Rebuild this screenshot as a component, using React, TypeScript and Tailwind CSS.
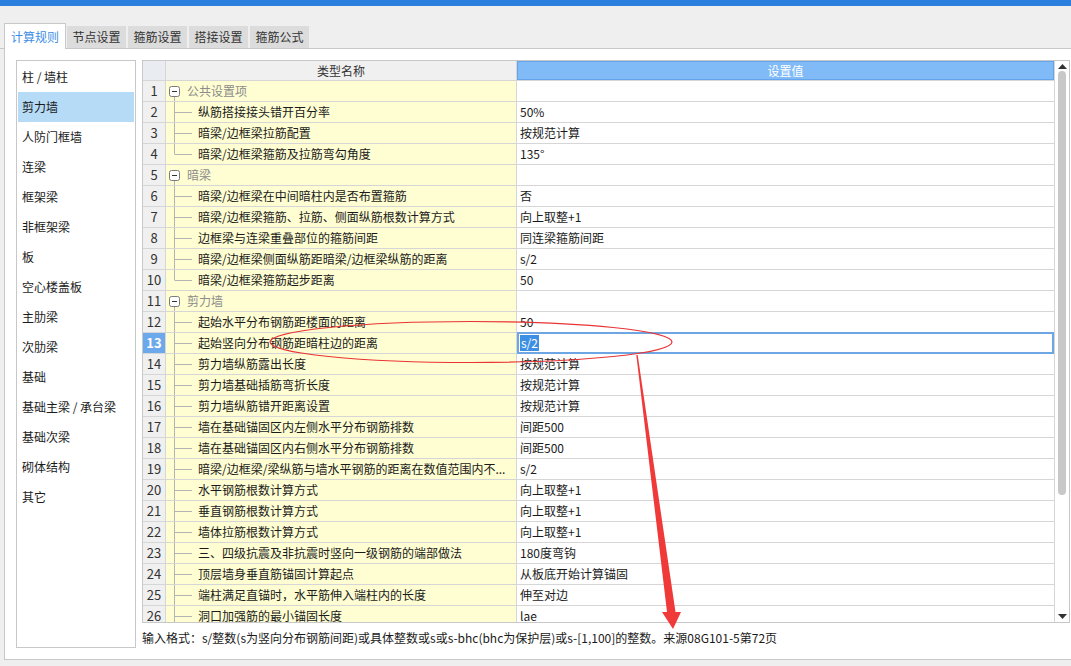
import React from "react";

type Row = { name: string; value: string; group?: boolean; last?: boolean };

const rows: Row[] = [
  { name: "公共设置项", value: "", group: true },
  { name: "纵筋搭接接头错开百分率", value: "50%" },
  { name: "暗梁/边框梁拉筋配置", value: "按规范计算" },
  { name: "暗梁/边框梁箍筋及拉筋弯勾角度", value: "135°", last: true },
  { name: "暗梁", value: "", group: true },
  { name: "暗梁/边框梁在中间暗柱内是否布置箍筋", value: "否" },
  { name: "暗梁/边框梁箍筋、拉筋、侧面纵筋根数计算方式", value: "向上取整+1" },
  { name: "边框梁与连梁重叠部位的箍筋间距", value: "同连梁箍筋间距" },
  { name: "暗梁/边框梁侧面纵筋距暗梁/边框梁纵筋的距离", value: "s/2" },
  { name: "暗梁/边框梁箍筋起步距离", value: "50", last: true },
  { name: "剪力墙", value: "", group: true },
  { name: "起始水平分布钢筋距楼面的距离", value: "50" },
  { name: "起始竖向分布钢筋距暗柱边的距离", value: "s/2" },
  { name: "剪力墙纵筋露出长度", value: "按规范计算" },
  { name: "剪力墙基础插筋弯折长度", value: "按规范计算" },
  { name: "剪力墙纵筋错开距离设置", value: "按规范计算" },
  { name: "墙在基础锚固区内左侧水平分布钢筋排数", value: "间距500" },
  { name: "墙在基础锚固区内右侧水平分布钢筋排数", value: "间距500" },
  { name: "暗梁/边框梁/梁纵筋与墙水平钢筋的距离在数值范围内不...", value: "s/2" },
  { name: "水平钢筋根数计算方式", value: "向上取整+1" },
  { name: "垂直钢筋根数计算方式", value: "向上取整+1" },
  { name: "墙体拉筋根数计算方式", value: "向上取整+1" },
  { name: "三、四级抗震及非抗震时竖向一级钢筋的端部做法", value: "180度弯钩" },
  { name: "顶层墙身垂直筋锚固计算起点", value: "从板底开始计算锚固" },
  { name: "端柱满足直锚时，水平筋伸入端柱内的长度", value: "伸至对边" },
  { name: "洞口加强筋的最小锚固长度", value: "lae" },
];

const sideItems = [
  "柱 / 墙柱",
  "剪力墙",
  "人防门框墙",
  "连梁",
  "框架梁",
  "非框架梁",
  "板",
  "空心楼盖板",
  "主肋梁",
  "次肋梁",
  "基础",
  "基础主梁 / 承台梁",
  "基础次梁",
  "砌体结构",
  "其它",
];

const tabs = ["节点设置", "箍筋设置", "搭接设置", "箍筋公式"];

const GroupIcon = () => (
  <svg width="21" height="20" className="shrink-0">
    <rect x="3.5" y="5.5" width="10" height="10" rx="2" fill="#fff" stroke="#7a7a7a" />
    <line x1="6" y1="10.5" x2="11" y2="10.5" stroke="#333" />
    <line x1="8.5" y1="16" x2="8.5" y2="20" stroke="#b4b4b4" />
  </svg>
);

const ChildIcon = ({ last }: { last?: boolean }) => (
  <svg width="32" height="20" className="shrink-0">
    <line x1="8.5" y1="0" x2="8.5" y2={last ? 10.5 : 20} stroke="#b4b4b4" />
    <line x1="9" y1="10.5" x2="26" y2="10.5" stroke="#b4b4b4" />
  </svg>
);

const TableRow = ({ row, index }: { row: Row; index: number }) => {
  const selected = index === 13;
  return (
    <div className="flex h-[21px] shrink-0 border-b border-[#d6d6d6]">
      <div
        className={`w-[23px] shrink-0 border-r border-[#d6d6d6] flex items-center justify-center text-[13px] ${
          selected ? "bg-[#6ca8ec] text-white font-bold" : "bg-[#f0f0f0] text-[#333]"
        }`}
      >
        {index}
      </div>
      <div className="w-[351px] shrink-0 border-r border-[#d6d6d6] bg-[#fffed2] flex items-center overflow-hidden whitespace-nowrap">
        {row.group ? <GroupIcon /> : <ChildIcon last={row.last} />}
        <span className={`text-[12px] leading-[20px] ${row.group ? "text-[#8c8c8c]" : "text-[#1a1a1a]"}`}>
          {row.name}
        </span>
      </div>
      {selected ? (
        <div className="flex-1 self-start -mt-px h-[22px] border-2 border-[#6ea6e4] bg-white flex items-center pl-px">
          <span className="bg-[#3d8fe3] text-white text-[12px] leading-[16px] px-px">{row.value}</span>
        </div>
      ) : (
        <div className="flex-1 bg-white flex items-center pl-[3px] text-[12px] leading-[20px] text-[#1a1a1a] whitespace-nowrap">
          {row.value}
        </div>
      )}
    </div>
  );
};

export default function App() {
  return (
    <div className="relative w-[1071px] h-[666px] overflow-hidden bg-[#efefef] font-['Noto_Sans_CJK_SC',sans-serif]">
      <div className="h-[6px] bg-[#2b7fdf]" />

      {/* tab strip */}
      <div className="h-[43px] flex items-end pl-[4px] border-b border-[#c8c8c8]">
        <div className="w-[62px] h-[26px] -mb-px bg-white border-t border-l border-r border-[#c8c8c8] flex items-center justify-center text-[12px] text-[#3d8ee6]">
          计算规则
        </div>
        <div className="flex gap-[2px] ml-[1px]">
          {tabs.map((t) => (
            <div
              key={t}
              className="w-[59px] h-[22px] bg-[#dcdcdc] flex items-center justify-center text-[12px] text-[#333]"
            >
              {t}
            </div>
          ))}
        </div>
      </div>

      {/* content panel */}
      <div className="ml-[4px] h-[611px] bg-white border-l border-b border-[#c8c8c8] pt-[11px] pl-[11px] flex gap-[6px]">
        <div className="w-[120px] h-[588px] shrink-0 border border-[#c8c8c8] p-px">
          {sideItems.map((s, i) => (
            <div
              key={s}
              className={`h-[30px] flex items-center pl-[4px] text-[12px] text-[#1a1a1a] ${
                i === 1 ? "bg-[#b5dbf6]" : ""
              }`}
            >
              {s}
            </div>
          ))}
        </div>

        <div className="flex flex-col">
          <div className="w-[928px] h-[563px] border border-[#c8c8c8] flex overflow-hidden">
            <div className="flex-1 flex flex-col">
              <div className="flex h-[20px] shrink-0 border-b border-[#d6d6d6]">
                <div className="w-[23px] shrink-0 border-r border-[#d6d6d6] bg-[#e9ecf0]" />
                <div className="w-[351px] shrink-0 border-r border-[#d6d6d6] bg-[#f0f0f0] flex items-center justify-center text-[12px] text-[#333]">
                  类型名称
                </div>
                <div className="flex-1 bg-[#80bbf8] border border-[#64a4ec] flex items-center justify-center text-[12px] text-white">
                  设置值
                </div>
              </div>
              {rows.map((r, i) => (
                <TableRow key={i} row={r} index={i + 1} />
              ))}
            </div>
            {/* scrollbar */}
            <div className="w-[15px] shrink-0 border-l border-[#d6d6d6] bg-white flex flex-col items-center">
              <svg width="9" height="5" className="mt-[3px]">
                <polygon points="0,5 9,5 4.5,0" fill="#333" />
              </svg>
              <div className="mt-[2px] w-[8px] h-[424px] rounded-full bg-[#c8c8c8]" />
              <div className="flex-1" />
              <svg width="9" height="5" className="mb-[3px]">
                <polygon points="0,0 9,0 4.5,5" fill="#333" />
              </svg>
            </div>
          </div>
          <div className="mt-[6px] leading-[18px] text-[12px] text-[#1a1a1a] whitespace-nowrap">
            输入格式：s/整数(s为竖向分布钢筋间距)或具体整数或s或s-bhc(bhc为保护层)或s-[1,100]的整数。来源08G101-5第72页
          </div>
        </div>
      </div>

      {/* red annotation */}
      <svg className="absolute left-0 top-0 pointer-events-none" width="1071" height="666">
        <ellipse cx="471" cy="342" rx="201" ry="20.5" fill="none" stroke="#e83434" strokeWidth="1.2" />
        <polygon
          points="636.3,355 637.7,355 675.5,612 681,612 673,629 662,612 667,612"
          fill="#f03a3a"
        />
      </svg>
    </div>
  );
}
